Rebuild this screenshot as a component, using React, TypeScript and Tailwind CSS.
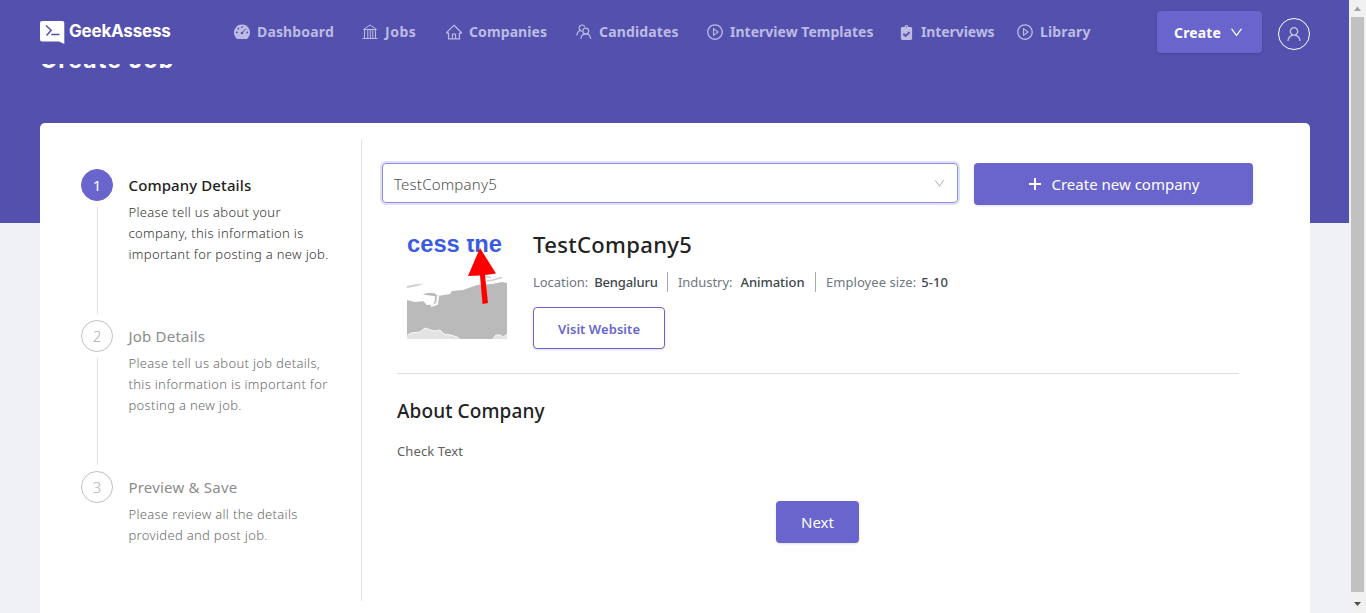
import React from "react";
import { AiOutlineDown, AiOutlineHome, AiOutlinePlayCircle, AiOutlineUser } from "react-icons/ai";
import { FaClipboardCheck } from "react-icons/fa";

function DashboardIcon() {
  return (
    <svg viewBox="0 0 16 16" className="h-4 w-4 shrink-0">
      <path d="M8 .5a8 8 0 0 0-6.400 12.800c.8 1.100 1 1.700 2 1.700h8.800c1 0 1.200-.6 2-1.700A8 8 0 0 0 8 .5z" fill="currentColor" />
      <g fill="#5350ae">
        <circle cx="8" cy="3.100" r=".9" />
        <circle cx="4.300" cy="4.700" r=".9" />
        <circle cx="2.800" cy="8.400" r=".9" />
        <circle cx="13.200" cy="8.400" r=".9" />
        <circle cx="8" cy="9" r="1.300" />
      </g>
      <path d="M8 9l3.800-4.300" stroke="#5350ae" strokeWidth="1" />
    </svg>
  );
}

function JobsIcon() {
  return (
    <svg viewBox="0 0 16 16" className="h-4 w-4 shrink-0" fill="none" stroke="currentColor" strokeWidth="1">
      <path d="M1.500 5.500L8 1l6.500 4.500z" />
      <path d="M2.500 5.500v9M5.800 6v8M8.300 6v8M10.800 6v8M13.500 5.500v9M.5 14.500h15" />
    </svg>
  );
}

function CandidatesIcon() {
  return (
    <svg viewBox="0 0 16 16" className="h-4 w-4 shrink-0" fill="none" stroke="currentColor" strokeWidth="1.2" strokeLinecap="round">
      <circle cx="9.800" cy="7.100" r="2.900" />
      <path d="M5 14.500c.3-2.800 2-4.600 4.800-4.600s4.500 1.800 4.800 4.600" />
      <path d="M8.600 2.300A3 3 0 1 0 4.200 6.300C2.300 7.300 1.100 8.900 1 11" />
      <path d="M4.200 6.300l1.400.9" />
    </svg>
  );
}

const navItems = [
  { label: "Dashboard", icon: <DashboardIcon />, box: "w-[128px]", text: "ml-[7px] tracking-[0.15px]" },
  { label: "Jobs", icon: <JobsIcon />, box: "w-[84px]", text: "ml-[7px] tracking-[0.5px]" },
  { label: "Companies", icon: <AiOutlineHome size={18} className="-ml-px" />, box: "w-[130px]", text: "ml-[6px] tracking-[0.1px]" },
  { label: "Candidates", icon: <CandidatesIcon />, box: "w-[131px]", text: "ml-[7px] tracking-[0.15px]" },
  { label: "Interview Templates", icon: <AiOutlinePlayCircle size={18} className="-ml-px" />, box: "w-[193px]", text: "ml-[6px] tracking-[0.02px]" },
  { label: "Interviews", icon: <FaClipboardCheck size={15} className="-ml-px" />, box: "w-[117px]", text: "ml-[7px] tracking-[-0.1px]" },
  { label: "Library", icon: <AiOutlinePlayCircle size={18} className="-ml-px" />, box: "w-[80px]", text: "ml-[6px] tracking-[0.15px]" },
];

function Logo() {
  return (
    <div className="flex w-[194px] items-center">
      <svg viewBox="0 0 25 24" className="mt-[1px] h-6 w-[25px]">
        <path d="M2 1h20.300a2 2 0 0 1 2 2V24l-5.300-2.500H2A2 2 0 0 1 0 19.500V3a2 2 0 0 1 2-2z" fill="#fff" />
        <path d="M6 5.500l5.200 4.800L6.500 15.500M11.300 14.600h8.200" fill="none" stroke="#5350ae" strokeWidth="1.500" />
      </svg>
      <span className="ml-[4px] font-['Inter',sans-serif] text-[17px] leading-6 font-bold tracking-[-0.2px] text-white">GeekAssess</span>
    </div>
  );
}

function Header() {
  return (
    <header className="relative z-10 flex h-16 shrink-0 items-start bg-[#5350ae] pl-10">
      <div className="flex h-16 items-center pb-[2px]"><Logo /></div>
      <nav className="flex h-16 items-center text-[#bdbbe3]">
        {navItems.map((item) => (
          <a key={item.label} className={"flex shrink-0 items-center " + item.box}>
            {item.icon}
            <span className={"text-[14px] leading-5 font-bold whitespace-nowrap " + item.text}>{item.label}</span>
          </a>
        ))}
      </nav>
      <button className="mt-[11px] ml-[60px] flex h-[42px] w-[105px] shrink-0 items-center rounded-[4px] bg-[#6965cc] pt-px pl-[17px] text-[14px] font-bold tracking-[0.15px] text-white shadow-sm">
        Create
        <AiOutlineDown size={15} className="ml-[8px]" />
      </button>
      <div className="mt-[18px] ml-4 flex h-8 w-8 shrink-0 items-center justify-center rounded-full border border-white text-[#c5c4e6]">
        <AiOutlineUser size={18} />
      </div>
    </header>
  );
}

const steps = [
  { title: "Company Details", lines: ["Please tell us about your", "company, this information is", "important for posting a new job."] },
  { title: "Job Details", lines: ["Please tell us about job details,", "this information is important for", "posting a new job."] },
  { title: "Preview & Save", lines: ["Please review all the details", "provided and post job."] },
];

function Steps() {
  return (
    <aside className="mt-4 h-[462px] w-[322px] shrink-0 border-r border-[#e4e4e4] pt-[30px] pl-[41px]">
      {steps.map((step, i) => {
        const active = i === 0;
        return (
          <div key={step.title} className="flex h-[151px]">
            <div className="flex w-8 flex-col items-center">
              <div className={"flex h-8 w-8 shrink-0 items-center justify-center rounded-full border text-[15px] " + (active ? "border-[#6965cc] bg-[#6965cc] text-white" : "border-[#bfbfbf] font-light text-[#b0b0b0]")}>
                {i + 1}
              </div>
              {i < 2 && <div className="mt-[6px] h-[107px] w-px bg-[#e0e0e0]" />}
            </div>
            <div className="ml-[15.5px]">
              <div className={"h-[33px] text-[15px] leading-8 whitespace-nowrap " + (active ? "font-medium tracking-[0.1px] text-[#222]" : "tracking-[0.2px] text-[#8c8c8c]")}>{step.title}</div>
              <div className={"text-[13px] leading-[21px] tracking-[0.32px] font-light whitespace-nowrap " + (active ? "text-[#333]" : "text-[#6c6c6c]")}>
                {step.lines.map((line) => (
                  <div key={line}>{line}</div>
                ))}
              </div>
            </div>
          </div>
        );
      })}
    </aside>
  );
}

function CompanyPicture() {
  return (
    <svg viewBox="0 0 100 100" className="mt-[7px] h-[100px] w-[100px] shrink-0 overflow-hidden">
      <text x="0" y="12.5" fontFamily="Liberation Sans" fontWeight="bold" fontSize="23" textLength="95" lengthAdjust="spacingAndGlyphs" fill="#3b5be5">cess the</text>
      <path d="M0 47L7 45.500L17 44.500L10 47L0 49z" fill="#cdcdcd" />
      <path d="M0 60L8 62L17 61L20 65L24 66L27 64L28 59L24 57L15 56L20 54L27 54L31 57L43 55L45 52L56 51L70 46L85 45L95 43L100 44V100H0z" fill="#bababa" />
      <path d="M0 60L8 62L17 61L20 65L26 64L27 58L15 56.500M31 57L30 65L24 67" stroke="#fff" strokeWidth="2" fill="none" />
      <path d="M76 37L84 38.500M80 42L86 41L95 38.500" stroke="#cfcfcf" strokeWidth="1.500" fill="none" />
      <path d="M-1 97L4 94L13 93L18 89L27 92L33 91L37 95L44 96L50 98L54 101H-1z" fill="#e3e3e3" stroke="#f8f8f8" />
      <path d="M85 101L89 96L93 96L96 98L101 95V101z" fill="#e3e3e3" stroke="#f8f8f8" />
      <path d="M73 9L89 34.500L78 36L81 64L75.500 65L73 36.500L61 37z" fill="#f00" />
    </svg>
  );
}

function Fact({ label, value, box, space }: { label: string; value: string; box: string; space: string }) {
  return (
    <div className={"flex h-5 items-center pt-[2px] text-[13px] whitespace-nowrap " + box}>
      <span className="text-[#6f7780]">{label}</span>
      <span className={"font-medium text-[#40464d] " + space}>{value}</span>
    </div>
  );
}

function CompanyPanel() {
  return (
    <main className="flex w-[892px] flex-col pt-10 pl-[20px]">
      <div className="flex items-start">
        <div className="flex h-10 w-[576px] items-center justify-between rounded-[4px] border border-[#8f8ce0] pr-[11px] pl-[11px] text-[#505050] shadow-[0_0_0_2px_#dfdff5]">
          <span className="pt-[2px] text-[15px] tracking-[0.2px] font-light">TestCompany5</span>
          <AiOutlineDown size={13} className="text-[#bfbfbf]" />
        </div>
        <button className="ml-4 flex h-[42px] w-[279px] items-center justify-center rounded-[4px] bg-[#6965cc] text-[15px] text-white shadow-sm">
          <svg viewBox="0 0 16 16" className="mr-2 h-4 w-4"><path d="M2 8h12M8 2v12" stroke="#fff" strokeWidth="1.900" /></svg>
          Create new company
        </button>
      </div>
      <div className="mt-[27px] ml-[15px] h-[142px] w-[842px] border-b border-[#e0e0e0] pl-[10px]">
        <div className="flex">
          <CompanyPicture />
          <div className="ml-[26px]">
            <h2 className="h-[30px] text-[22px] leading-[24px] font-medium tracking-[0.35px] whitespace-nowrap text-[#222]">TestCompany5</h2>
            <div className="mt-[10px] flex h-5 items-center">
              <Fact label="Location:" value="Bengaluru" box="w-[134px] tracking-[-0.05px]" space="ml-[6px] tracking-[-0.15px]" />
              <Fact label="Industry:" value="Animation" box="w-[148px] border-l border-[#aaa] pl-[10px] tracking-[-0.05px]" space="ml-[8px]" />
              <Fact label="Employee size:" value="5-10" box="border-l border-[#aaa] pl-[10px] tracking-[0.05px]" space="ml-[5px]" />
            </div>
            <button className="mt-[15px] flex h-[42px] w-[132px] items-center justify-center rounded-[4px] border border-[#6965cc] bg-white pt-[3px] text-[13px] font-semibold tracking-[0.05px] text-[#6965cc] shadow-sm">Visit Website</button>
          </div>
        </div>
      </div>
      <h3 className="mt-[23px] ml-[15px] text-[19px] leading-7 font-medium tracking-[0.1px] text-[#222]">About Company</h3>
      <p className="mt-[14px] ml-[15px] text-[13px] leading-6 tracking-[0.1px] text-[#606060]">Check Text</p>
      <button className="mt-[38px] ml-[394px] flex h-[42px] w-[83px] items-center justify-center rounded-[4px] bg-[#6965cc] text-[15px] text-white shadow-sm">Next</button>
    </main>
  );
}

function ScrollBar() {
  return (
    <div className="flex h-[613px] w-[17px] shrink-0 flex-col items-center bg-[#f1f1f1]">
      <svg viewBox="0 0 17 17" className="h-[17px] w-[17px]"><path d="M8.500 6.500L12 11H5z" fill="#a3a3a3" /></svg>
      <div className="h-[575px] w-[13px] bg-[#c1c1c1]" />
      <svg viewBox="0 0 17 17" className="h-[17px] w-[17px]"><path d="M8.500 14L12 10H5z" fill="#505050" /></svg>
    </div>
  );
}

export default function App() {
  return (
    <div className="flex h-[613px] w-[1366px] overflow-hidden bg-[#f0f1f6] font-['Noto_Sans',sans-serif]">
      <div className="flex w-[1349px] shrink-0 flex-col bg-[linear-gradient(#5350ae_223px,#f0f1f6_223px)]">
        <Header />
        <h1 className="-mt-[22px] ml-10 h-[81px] shrink-0 font-['Inter',sans-serif] text-[23px] leading-[36px] font-bold tracking-[1.2px] text-white">Create Job</h1>
        <section className="ml-10 flex h-[490px] w-[1270px] shrink-0 rounded-t-[5px] bg-white">
          <Steps />
          <CompanyPanel />
        </section>
      </div>
      <ScrollBar />
    </div>
  );
}
